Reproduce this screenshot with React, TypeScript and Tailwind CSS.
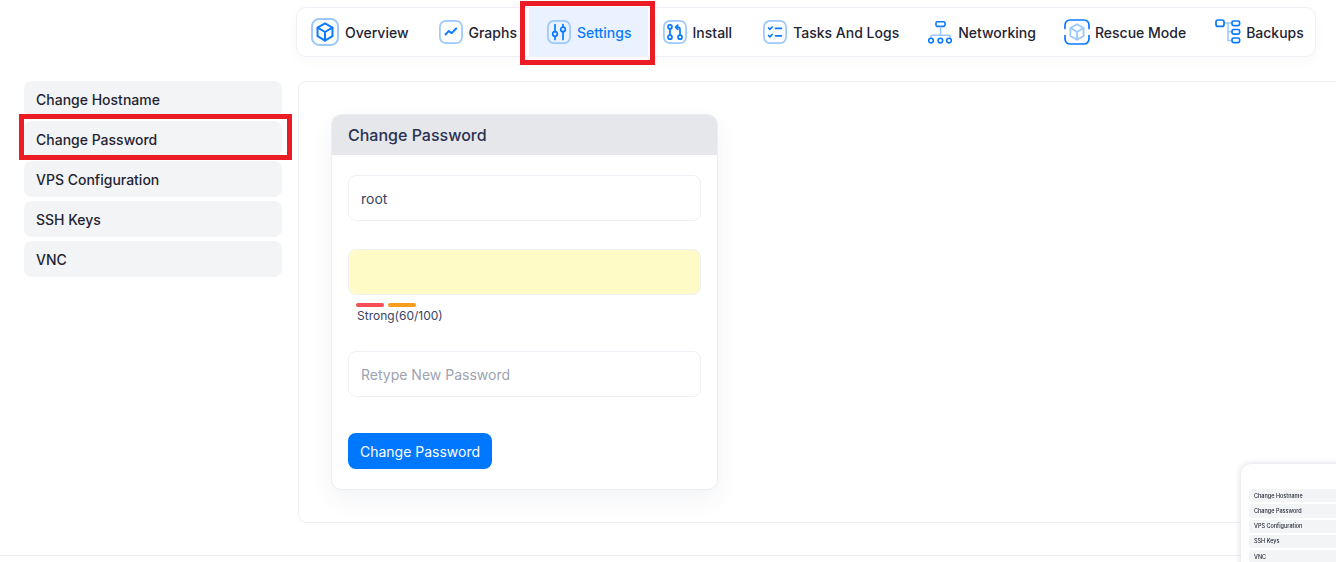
import type { ReactNode } from 'react';

const BLUE = '#0a7aff';
const SOFT = '#9cc8fb';

// rounded tile shared by most of the nav icons
function Tile({ size = 24, children }: { size?: number; children: ReactNode }) {
  return (
    <svg width={size} height={size} viewBox="0 0 24 24" fill="none" strokeLinecap="round" strokeLinejoin="round" className="shrink-0">
      <rect x="0.9" y="0.9" width="22.2" height="22.2" rx="6" stroke={SOFT} strokeWidth="1.7" />
      {children}
    </svg>
  );
}

const ICONS: Record<string, ReactNode> = {
  Overview: (
    <Tile size={28}>
      <g stroke={BLUE} strokeWidth="1.7">
        <path d="M12 4.6l6.4 3.6v7.4L12 19.4l-6.4-3.8V8.2z" />
        <path d="M5.8 8.3L12 12l6.2-3.7M12 12v7.2" />
      </g>
    </Tile>
  ),
  Graphs: (
    <Tile>
      <path d="M6.5 14.5l3.2-3.4 3 2 4.5-4.6" stroke={BLUE} strokeWidth="1.9" />
    </Tile>
  ),
  Settings: (
    <Tile>
      <g stroke={BLUE} strokeWidth="1.7">
        <circle cx="8" cy="14" r="2.3" />
        <circle cx="16" cy="9.4" r="2.3" />
        <path d="M8 4.5v7.2M8 16.3v3.2M16 4.5v2.6M16 11.7v7.8" />
      </g>
    </Tile>
  ),
  Install: (
    <Tile>
      <g stroke={BLUE} strokeWidth="1.7">
        <circle cx="7" cy="6.8" r="2" />
        <circle cx="7" cy="17.2" r="2" />
        <circle cx="17" cy="17.2" r="2" />
        <path d="M7 8.8v6.4M17 15.2V9.4c0-1.3-.8-2.2-2.2-2.2h-1.6M14.8 5l-2.2 2.2 2.2 2.2" />
      </g>
    </Tile>
  ),
  'Tasks And Logs': (
    <Tile>
      <g stroke={BLUE} strokeWidth="1.7">
        <path d="M5.5 8l1.4 1.3L9.2 7M5.5 15.5l1.4 1.3 2.3-2.3M12.5 8.4h6M12.5 15.8h6" />
      </g>
    </Tile>
  ),
  Networking: (
    <svg width="24" height="23" viewBox="0 0 24 23" fill="none" className="shrink-0">
      <rect x="8" y="0.8" width="9" height="4.6" rx="1.3" stroke={BLUE} strokeWidth="1.6" />
      <path d="M12.5 5.5v9M3 17v-1.8c0-.6.4-1 1-1h17c.6 0 1 .4 1 1V17" stroke={SOFT} strokeWidth="1.6" />
      <circle cx="3" cy="19.6" r="2.3" stroke={BLUE} strokeWidth="1.6" />
      <circle cx="12.4" cy="19.6" r="2.3" stroke={BLUE} strokeWidth="1.6" />
      <circle cx="21" cy="19.6" r="2.3" stroke={BLUE} strokeWidth="1.6" />
    </svg>
  ),
  'Rescue Mode': (
    <svg width="26" height="26" viewBox="0 0 26 26" fill="none" strokeLinecap="round" strokeLinejoin="round" className="shrink-0">
      <path d="M1 9.5V6a5 5 0 015-5h14a5 5 0 015 5v3.5M25 16.5V20a5 5 0 01-5 5H6a5 5 0 01-5-5v-3.5" stroke={BLUE} strokeWidth="1.7" />
      <g stroke={SOFT} strokeWidth="1.8">
        <path d="M13 5.2l6.6 3.8v8L13 20.8 6.4 17V9z" />
        <path d="M6.6 9.1L13 13l6.4-3.9M13 13v7.6" />
      </g>
    </svg>
  ),
  Backups: (
    <svg width="26" height="26" viewBox="0 0 26 26" fill="none" className="shrink-0">
      <path d="M9 4h7.5M13 4v17.5h3.5M13 12.8h3.5" stroke={SOFT} strokeWidth="1.5" />
      <rect x="1" y="1" width="8" height="6.4" rx="2" stroke={BLUE} strokeWidth="1.7" />
      <rect x="17" y="2" width="7.6" height="4.6" rx="1.5" stroke={BLUE} strokeWidth="1.7" />
      <rect x="17" y="10.5" width="7.6" height="4.6" rx="1.5" stroke={BLUE} strokeWidth="1.7" />
      <rect x="17" y="19" width="7.6" height="4.6" rx="1.5" stroke={BLUE} strokeWidth="1.7" />
    </svg>
  ),
};

const TABS = [
  { label: 'Overview', cls: 'gap-[6px] text-[#1f2433]' },
  { label: 'Graphs', cls: 'gap-[6px] text-[#1f2433]' },
  { label: 'Settings', cls: 'gap-[6px] -ml-[18px] -mr-[16px] bg-[#e9f2fe] pl-[18px] pr-[16px] text-[#0a7aff]' },
  { label: 'Install', cls: 'gap-[6px] ml-[1px] text-[#1f2433]' },
  { label: 'Tasks And Logs', cls: 'gap-[6px] ml-[1px] text-[#1f2433]' },
  { label: 'Networking', cls: 'gap-[6px] -ml-[1px] text-[#1f2433]' },
  { label: 'Rescue Mode', cls: 'gap-[5px] -ml-[2px] text-[#1f2433]' },
  { label: 'Backups', cls: 'gap-[5px] -ml-[1px] text-[#1f2433]' },
];
const SIDE = ['Change Hostname', 'Change Password', 'VPS Configuration', 'SSH Keys', 'VNC'];

export default function App() {
  return (
    <div className="relative w-[1336px] h-[562px] overflow-hidden bg-white font-['Inter',sans-serif]">
      {/* Tabs */}
      <div className="pt-[7px] pl-[296px] pr-[20px]">
        <div className="flex h-[50px] items-center gap-[30px] rounded-[10px] border border-[#eef0f5] pl-[14px] shadow-[0_4px_12px_rgba(50,60,110,0.03)]">
          {TABS.map(tab => (
            <div key={tab.label} className={`flex h-[48px] items-center text-[14px] font-medium ${tab.cls}`}>
              {ICONS[tab.label]}
              <span>{tab.label}</span>
            </div>
          ))}
        </div>
      </div>

      {/* Body */}
      <div className="mt-[24px] flex gap-[16px] pl-[24px]">
        <div className="flex w-[258px] shrink-0 flex-col gap-[4px]">
          {SIDE.map(item => (
            <div key={item} className="flex h-[36px] items-center rounded-[8px] bg-[#f3f4f6] px-[12px] text-[14px] font-medium text-[#1f2433]">
              {item}
            </div>
          ))}
        </div>

        <div className="h-[442px] w-[1060px] shrink-0 rounded-[8px] border border-[#eef0f5] pl-[32px] pt-[32px]">
          <div className="w-[387px] overflow-hidden rounded-[10px] border border-[#eceef3] bg-white shadow-[0_10px_24px_rgba(50,60,110,0.06)]">
            <div className="flex h-[40px] items-center bg-[#e5e7eb] px-[16px] text-[16px] font-medium text-[#2b3150]">Change Password</div>
            <div className="px-[16px] pb-[20px] pt-[20px]">
              <input
                readOnly
                value="root"
                className="block h-[46px] w-[353px] rounded-[8px] border border-[#eef0f5] bg-white px-[12px] text-[14px] text-[#3b4262] outline-none"
              />
              <input
                readOnly
                className="mt-[28px] block h-[46px] w-[353px] rounded-[8px] border border-[#eef0f5] bg-[#fefbc6] px-[12px] text-[14px] outline-none"
              />
              <div className="mt-[8px] flex gap-[4px] pl-[8px]">
                <div className="h-[4px] w-[28px] rounded-full bg-[#f74f55]" />
                <div className="h-[4px] w-[28px] rounded-full bg-[#f99d1c]" />
              </div>
              <div className="mt-[1px] pl-[9px] text-[12px] leading-[16px] text-[#3b4262]">Strong(60/100)</div>
              <input
                readOnly
                placeholder="Retype New Password"
                className="mt-[27px] block h-[46px] w-[353px] rounded-[8px] border border-[#eef0f5] bg-white px-[12px] text-[14px] outline-none placeholder:text-[#9ca3af]"
              />
              <button className="mt-[36px] block h-[36px] w-[144px] rounded-[8px] bg-[#0077ff] text-[14px] font-normal text-white">Change Password</button>
            </div>
          </div>
        </div>
      </div>

      <div className="mt-[32px] border-t border-[#eef0f5]" />

      {/* Red annotation boxes */}
      <div className="absolute left-[520px] top-[1px] h-[64px] w-[135px] border-[5px] border-[#ec1c24]" />
      <div className="absolute left-[19px] top-[114px] h-[46px] w-[273px] border-[5px] border-[#ec1c24]" />

      {/* Thumbnail preview */}
      <div className="absolute left-[1241px] top-[464px] h-[110px] w-[120px] rounded-tl-[10px] bg-white pl-[8px] pt-[25px] shadow-[0_0_6px_rgba(30,40,80,0.18)]">
        <div className="flex flex-col gap-[2px]">
          {SIDE.map(item => (
            <div key={item} className="flex h-[13.3px] items-center rounded-[3px] bg-[#f3f4f6] pl-[5px] text-[5.5px] font-medium text-[#1f2433]">
              <span className="blur-[0.3px]">{item}</span>
            </div>
          ))}
        </div>
      </div>
    </div>
  );
}
